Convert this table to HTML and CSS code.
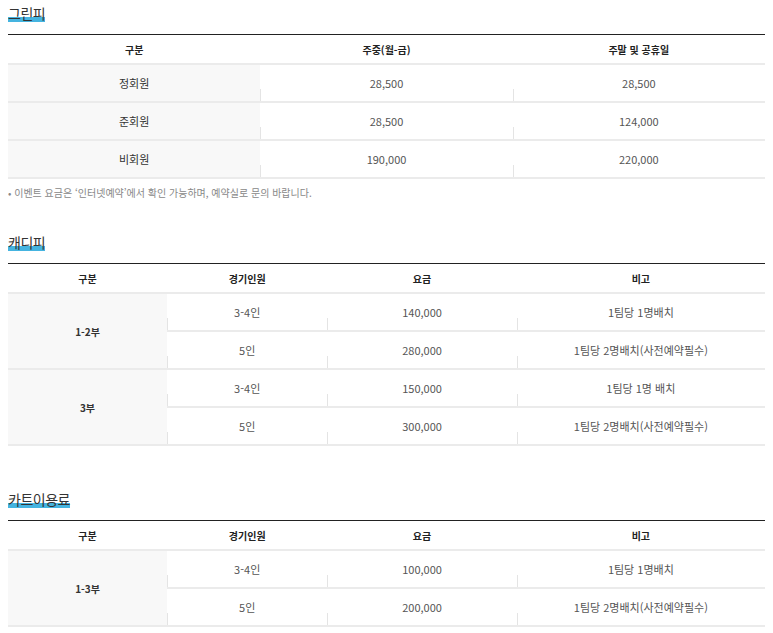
FILE: index.html
```html
<!DOCTYPE html>
<html lang="ko">
<head>
<meta charset="utf-8">
<title>이용요금</title>
<link rel="stylesheet" href="styles.css">
</head>
<body>
<section class="fee fee-green">
  <h2 class="fee-title"><span>그린피</span></h2>
  <table class="fee-table">
    <colgroup><col class="c3"><col class="c3"><col class="c3"></colgroup>
    <thead>
      <tr><th>구분</th><th>주중(월-금)</th><th>주말 및 공휴일</th></tr>
    </thead>
    <tbody>
      <tr><th>정회원</th><td>28,500</td><td>28,500</td></tr>
      <tr><th>준회원</th><td>28,500</td><td>124,000</td></tr>
      <tr><th>비회원</th><td>190,000</td><td>220,000</td></tr>
    </tbody>
  </table>
  <p class="fee-note">• 이벤트 요금은 ‘인터넷예약’에서 확인 가능하며, 예약실로 문의 바랍니다.</p>
</section>

<section class="fee fee-caddie">
  <h2 class="fee-title"><span>캐디피</span></h2>
  <table class="fee-table">
    <colgroup><col class="ca"><col class="cb"><col class="cc"><col class="cd"></colgroup>
    <thead>
      <tr><th>구분</th><th>경기인원</th><th>요금</th><th>비고</th></tr>
    </thead>
    <tbody>
      <tr><th rowspan="2">1-2부</th><td>3-4인</td><td>140,000</td><td>1팀당 1명배치</td></tr>
      <tr><td>5인</td><td>280,000</td><td>1팀당 2명배치(사전예약필수)</td></tr>
      <tr><th rowspan="2">3부</th><td>3-4인</td><td>150,000</td><td>1팀당 1명 배치</td></tr>
      <tr><td>5인</td><td>300,000</td><td>1팀당 2명배치(사전예약필수)</td></tr>
    </tbody>
  </table>
</section>

<section class="fee fee-cart">
  <h2 class="fee-title"><span>카트이용료</span></h2>
  <table class="fee-table">
    <colgroup><col class="ca"><col class="cb"><col class="cc"><col class="cd"></colgroup>
    <thead>
      <tr><th>구분</th><th>경기인원</th><th>요금</th><th>비고</th></tr>
    </thead>
    <tbody>
      <tr><th rowspan="2">1-3부</th><td>3-4인</td><td>100,000</td><td>1팀당 1명배치</td></tr>
      <tr><td>5인</td><td>200,000</td><td>1팀당 2명배치(사전예약필수)</td></tr>
    </tbody>
  </table>
</section>
</body>
</html>
```
FILE: styles.css
```css
* { box-sizing: border-box; }

body {
  margin: 0 8px;
  padding-top: 4px;
  font-family: "Noto Sans CJK KR", "Noto Sans", sans-serif;
  color: #555;
  background: #fff;
}

.fee-title {
  margin: 0;
  font-size: 14px;
  line-height: 18px;
  letter-spacing: -0.5px;
  font-weight: 400;
  color: #333;
}

.fee-title span {
  background: linear-gradient(to bottom, transparent 70%, #45b4e0 70%, #45b4e0 94%, transparent 94%);
}

.fee-table {
  width: 100%;
  table-layout: fixed;
  border-collapse: separate;
  border-spacing: 0;
  border-top: 1px solid #222;
  margin-top: 12px;
  font-size: 11px;
}

.c3 { width: 33.333%; }
.ca { width: 21%; }
.cb { width: 21.2%; }
.cc { width: 25%; }
.cd { width: 32.8%; }

.fee-table th,
.fee-table td {
  text-align: center;
  vertical-align: middle;
  border-bottom: 2px solid #ebebeb;
  padding: 0;
  font-weight: 400;
}

.fee-table thead th {
  height: 30px;
  font-weight: 700;
  font-size: 10px;
  color: #222;
}

.fee-table tbody th {
  height: 38px;
  background: #f8f8f8;
  color: #333;
}

.fee-table tbody td {
  height: 38px;
  color: #555;
  background: linear-gradient(#e4e4e4, #e4e4e4) left bottom / 1px 12px no-repeat;
}

.fee-caddie .fee-table tbody th,
.fee-cart .fee-table tbody th {
  font-weight: 700;
  font-size: 10px;
  color: #333;
}

.fee-note {
  margin: 7px 0 0;
  font-size: 10px;
  line-height: 14px;
  color: #888;
}

.fee-caddie { margin-top: 33px; }
.fee-caddie .fee-table { margin-top: 12px; }

.fee-cart { margin-top: 44px; }
.fee-cart .fee-table { margin-top: 12px; }
```
